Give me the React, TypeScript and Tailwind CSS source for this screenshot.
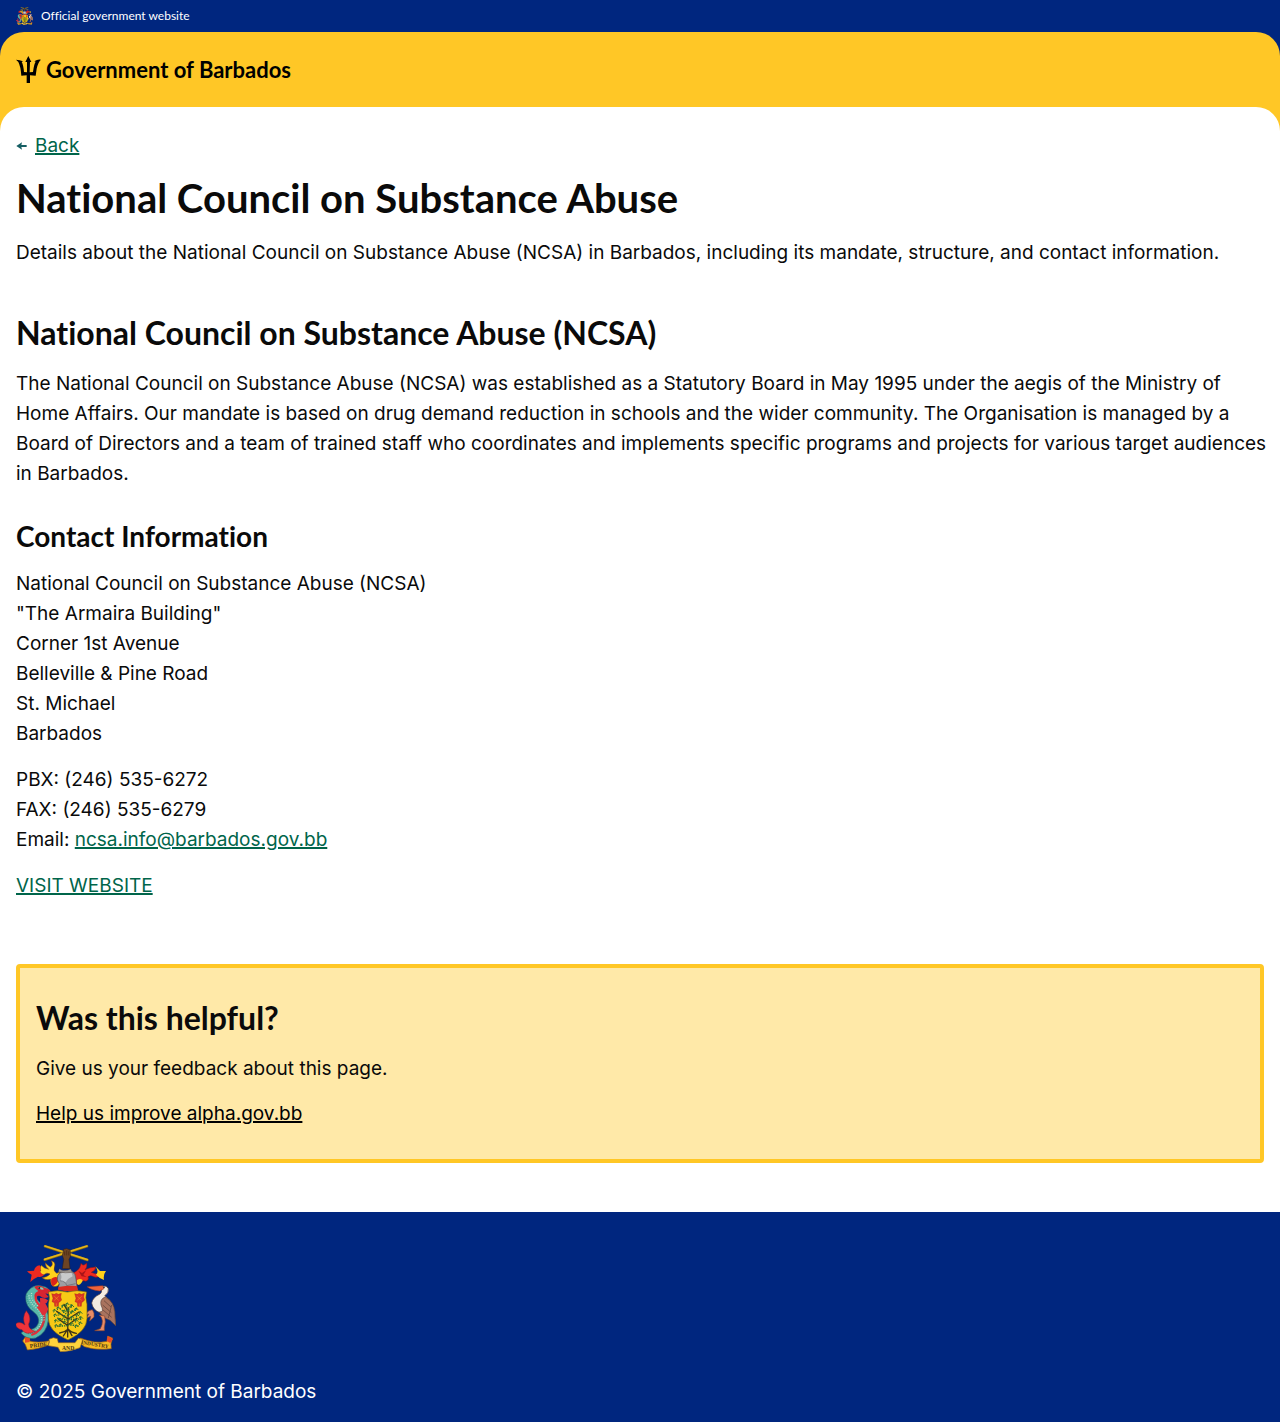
type ArmsProps = { className: string };

function CoatOfArms({ className }: ArmsProps) {
  return (
    <svg viewBox="24 24 300 324" className={className} role="img" aria-label="Barbados coat of arms">
      {/* crossed sugar canes and arm */}
      <path d="M111 31L238 72M237 31L110 71" stroke="#8a6a12" strokeWidth="8" strokeLinecap="round" />
      <path d="M111 30L238 71M237 30L110 70" stroke="#e3b51c" strokeWidth="5" strokeLinecap="round" />
      <path d="M166 44Q164 38 171 39Q176 35 181 40Q187 38 187 46V62L183 70L186 98H163L167 70L163 58Z" fill="#6d4423" stroke="#2c1a10" strokeWidth="1.5" />
      <path d="M170 46V58M176 43V58M182 46V58" stroke="#38200f" strokeWidth="1.5" />
      {/* mantling */}
      <path d="M166 112Q156 106 146 112Q134 104 140 90Q143 78 130 74Q137 88 127 93Q118 88 112 80Q112 92 122 100Q107 97 100 88Q94 95 98 105L88 113Q98 120 108 116Q116 108 126 114Q118 124 102 125Q113 134 128 130Q126 142 134 150Q150 156 157 138Z" fill="#ffd21c" stroke="#7d3a10" strokeWidth="1.5" />
      <path d="M95 88Q81 90 78 104L57 106Q64 114 71 116L67 138Q80 126 90 122Q99 126 108 117Q98 112 96 106Q100 96 95 88Z" fill="#ee2a20" />
      <path d="M130 128Q143 118 151 127Q152 142 134 151Q127 143 130 128Z" fill="#db2419" />
      <path d="M187 111Q198 114 208 103Q216 98 219 82Q225 93 236 81Q239 95 231 101Q246 94 263 93Q264 103 250 109Q265 117 279 113Q273 128 257 122Q247 116 240 122Q245 132 234 136Q221 130 209 145Q200 151 200 134Z" fill="#ee2a20" stroke="#7a1712" strokeWidth="1.5" />
      <path d="M262 91L276 105L294 105Q285 116 288 132Q274 127 264 116Q274 108 262 91Z" fill="#ffd21c" />
      <path d="M207 132Q216 126 224 132Q222 143 212 147L206 143Z" fill="#ffd21c" />
      <path d="M211 104L222 111L235 102L226 117L236 123L221 121Z" fill="#a71519" />
      {/* helmet */}
      <path d="M151 153Q158 144 148 132Q146 118 156 110Q174 100 192 106Q204 114 204 130L207 152Q183 166 151 153Z" fill="#9e9fa3" stroke="#4b4c52" strokeWidth="2" />
      <path d="M158 113Q174 104 190 108L194 121Q181 126 173 139L157 134Q163 124 158 113Z" fill="#c9cacc" />
      <path d="M156 134Q174 136 176 149L203 143" fill="none" stroke="#62636a" strokeWidth="2" />
      <path d="M151 153Q182 148 207 150L211 164Q182 169 150 161Z" fill="#dc2c20" />
      <path d="M154 98Q168 109 188 99L193 109Q173 113 151 107Z" fill="#98918d" stroke="#43342c" />
      {/* dolphin */}
      <path d="M60 165Q78 143 105 151Q124 155 123 166L106 168Q86 166 84 179Q84 190 99 202Q124 224 121 252Q117 291 83 306Q57 313 39 291L55 279Q82 285 91 261Q96 244 78 229Q52 211 53 184Q53 172 60 165Z" fill="#58b7a9" stroke="#22646a" strokeWidth="2" />
      <path d="M84 178Q79 195 98 211Q113 230 108 255Q101 286 70 297" fill="none" stroke="#e62d36" strokeWidth="7" />
      <path d="M63 178Q63 198 84 215Q105 233 100 258Q93 282 68 288M71 171Q66 190 90 210Q110 229 108 257" fill="none" stroke="#b8dfce" strokeWidth="4" strokeDasharray="3 4" />
      <path d="M57 178Q56 205 79 221M98 224Q115 242 104 274M60 293Q86 292 99 271" fill="none" stroke="#267c85" strokeWidth="3" strokeDasharray="2 4" />
      <path d="M79 153Q93 144 111 156Q126 158 128 167Q125 178 112 172L122 183Q106 190 96 180Q86 177 83 187Q73 173 91 165Q83 160 79 153Z" fill="#d72431" />
      <path d="M89 154Q103 151 108 160Q98 164 89 154Z" fill="#8acdb9" />
      <circle cx="94" cy="156" r="3" fill="#172b30" />
      <path d="M96 186Q110 184 120 193Q117 202 112 202L121 219Q114 239 103 238Q97 226 86 214Q99 211 96 186Z" fill="#df3038" />
      <path d="M55 224Q41 242 51 267Q34 254 23 264Q25 279 42 281Q54 300 82 286Q61 280 62 264Q72 243 55 224Z" fill="#ef333a" stroke="#8c2029" strokeWidth="1.5" />
      {/* pelican */}
      <path d="M278 153Q295 145 301 158Q303 171 290 179Q324 203 321 247L324 269L309 252Q287 244 276 230Q255 223 251 201Q254 184 276 174Q285 167 278 153Z" fill="#f4ece2" stroke="#5a4038" strokeWidth="2" />
      <path d="M291 183Q319 197 320 228L323 269L306 253Q283 245 274 228Q290 229 279 207Q275 190 291 183Z" fill="#a9735e" stroke="#573e37" strokeWidth="2" />
      <path d="M288 194L309 213M284 207L310 230M285 222L311 244M311 207L301 246" stroke="#6c493e" strokeWidth="2.5" />
      <path d="M284 149L237 152Q249 162 275 165L288 158Z" fill="#ef623a" stroke="#93331f" strokeWidth="1.5" />
      <circle cx="288" cy="154" r="2.5" fill="#271c20" />
      <path d="M253 221Q236 224 234 236L243 234L235 246L248 241L245 255L258 243V231ZM274 237Q291 252 277 278L260 284H289V274Q294 258 290 240Z" fill="#e78b67" stroke="#86472f" strokeWidth="2" />
      {/* shield */}
      <path d="M121 168Q149 160 178 168Q207 160 236 168Q231 184 237 204V247Q237 286 180 312Q121 287 121 247V204Q127 184 121 168Z" fill="#f7c916" stroke="#6d5b17" strokeWidth="2" />
      <g fill="#dc3426" stroke="#981e19" strokeWidth="1">
        <path d="M131 173L139 175L145 172L151 175L160 172L158 183L161 192L155 198L152 200L151 211H140L139 200L132 197L135 187Z" />
        <path d="M200 173L208 175L214 172L220 175L229 172L227 183L230 192L224 198L221 200L220 211H209L208 200L201 197L204 187Z" />
      </g>
      <path d="M139 181L152 193M152 181L139 193M208 181L221 193M221 181L208 193M145 202V210M214 202V210" stroke="#f5a81c" strokeWidth="1.5" />
      {/* fig tree */}
      <path d="M181 215L179 285M180 280Q171 289 155 291M179 280L166 300M179 279V303M181 280L192 299M180 279Q189 290 205 292M179 268L151 249M180 267L207 247M180 249L146 226M181 249L213 228M181 229L168 205" fill="none" stroke="#3c3218" strokeWidth="4" strokeLinecap="round" />
      <path d="M179 269L148 271M180 266L213 270M179 252L145 246M181 251L221 249M180 239L154 216M181 236L208 216M181 221L171 204M182 221L191 203" fill="none" stroke="#1e6b36" strokeWidth="4" strokeDasharray="4 3" />
      {[[140,224],[151,217],[165,211],[178,205],[192,211],[205,220],[217,231],[142,238],[155,234],[169,226],[193,228],[208,239],[219,246],[144,255],[156,251],[170,242],[192,245],[205,255],[217,262],[145,270],[158,268],[170,259],[191,263],[205,271],[180,225]].map(([x, y]) => (
        <path key={`${x}-${y}`} d={`M${x - 6} ${y}L${x} ${y - 4}L${x + 6} ${y + 2}M${x} ${y - 5}L${x - 3} ${y + 5}`} fill="none" stroke="#2e7135" strokeWidth="3" />
      ))}
      {/* motto ribbon */}
      <path d="M51 304L44 315L52 326L58 342Q88 340 121 328L125 314Q90 322 65 315L65 307ZM314 306L299 300L297 316Q261 324 217 306L212 318L229 332Q265 344 310 338L309 324Z" fill="#f6b922" stroke="#88501a" strokeWidth="2" />
      <path d="M123 310L136 305L148 308L151 320H201L211 307L225 310L216 335Q187 347 157 347L150 334L121 329L124 318Z" fill="#ffd33c" stroke="#97651c" strokeWidth="2" />
      <path d="M51 304L65 307L65 318L51 320ZM299 300L315 309L307 321L296 315Z" fill="#e94a25" />
      <g fill="#4c3415" fontFamily="Liberation Serif, serif" fontSize="17" fontWeight="bold">
        <text x="66" y="336" transform="rotate(-7 66 336)">PRIDE</text>
        <text x="162" y="341">AND</text>
        <text x="219" y="324" fontSize="16" transform="rotate(9 219 324)">INDUSTRY</text>
      </g>
    </svg>
  );
}

function Trident() {
  return (
    <svg viewBox="0 0 75 81" className="h-[27px] w-[25px] shrink-0" aria-hidden="true">
      <path d="M37 0L46 18H42L41 49L51 48Q54 23 59 17L55 16Q66 8 75 11Q67 17 62 38L59 59L42 58V81H32V58L16 59Q14 31 7 18L0 11Q11 11 21 16L17 18Q22 26 24 48L33 49V18H28Z" fill="currentColor" />
    </svg>
  );
}

const link = "text-[#00654a] underline decoration-2 underline-offset-1";
const heading = "font-[Lato,sans-serif] font-bold [font-variant-ligatures:none]";

export default function App() {
  return (
    <div className="bg-white font-[Inter,sans-serif] text-[19px] leading-[30px] text-[#0a0a0a]">
      <div className="bg-[#00267f]">
        <div className="flex h-8 items-center gap-2 px-4 text-xs text-white">
          <CoatOfArms className="h-[18px] w-[17px]" />
          <span className="font-[Lato,sans-serif] [font-variant-ligatures:none]">Official government website</span>
        </div>
        <header className="rounded-t-3xl bg-[#ffc726]">
          <div className="flex h-[75px] items-center px-4">
            <a href="/" className={`${heading} flex items-center gap-[5px] text-[22px] text-black`}>
              <Trident />
              Government of Barbados
            </a>
          </div>
          <div className="h-6 rounded-t-3xl bg-white" />
        </header>
      </div>

      <main className="px-4 pb-[49px]">
        <div className="flex items-center gap-2">
          <svg viewBox="0 0 33 24" className="h-2 w-[11px]" aria-hidden="true">
            <path d="M1 12L18 1L16 9H32V15H16L18 23Z" fill="#155e63" />
          </svg>
          <a href="/" className={link}>Back</a>
        </div>
        <h1 className={`${heading} mt-3 text-[40px] leading-[50px]`}>National Council on Substance Abuse</h1>
        <p className="mt-[15px]">
          Details about the National Council on Substance Abuse (NCSA) in Barbados, including its mandate, structure, and contact information.
        </p>

        <h2 className={`${heading} mt-[45px] text-[32px] leading-10`}>National Council on Substance Abuse (NCSA)</h2>
        <p className="-mr-2 mt-4">
          The National Council on Substance Abuse (NCSA) was established as a Statutory Board in May 1995 under the aegis of the Ministry of Home Affairs. Our mandate is based on drug demand reduction in schools and the wider community. The Organisation is managed by a Board of Directors and a team of trained staff who coordinates and implements specific programs and projects for various target audiences in Barbados.
        </p>

        <h3 className={`${heading} mt-[29px] text-[28px] leading-9`}>Contact Information</h3>
        <address className="mt-[15px] not-italic">
          National Council on Substance Abuse (NCSA)<br />
          "The Armaira Building"<br />
          Corner 1st Avenue<br />
          Belleville &amp; Pine Road<br />
          St. Michael<br />
          Barbados
        </address>
        <p className="mt-4">
          PBX: (246) 535-6272<br />
          FAX: (246) 535-6279<br />
          Email: <a href="mailto:ncsa.info@barbados.gov.bb" className={link}>ncsa.info@barbados.gov.bb</a>
        </p>
        <p className="mt-4"><a href="/" className={link}>VISIT WEBSITE</a></p>

        <section className="mt-[63px] rounded border-4 border-[#ffc726] bg-[#ffe9a8] px-4 py-[30px]">
          <h2 className={`${heading} text-[32px] leading-10`}>Was this helpful?</h2>
          <p className="mt-4">Give us your feedback about this page.</p>
          <p className="mt-[15px]">
            <a href="/feedback" className="text-black underline decoration-2 underline-offset-1">Help us improve alpha.gov.bb</a>
          </p>
        </section>
      </main>

      <footer className="bg-[#00267f] px-4 pb-[15px] pt-8 text-white">
        <CoatOfArms className="h-[108px] w-[100px]" />
        <p className="mt-[25px]">© 2025 Government of Barbados</p>
      </footer>
    </div>
  );
}
